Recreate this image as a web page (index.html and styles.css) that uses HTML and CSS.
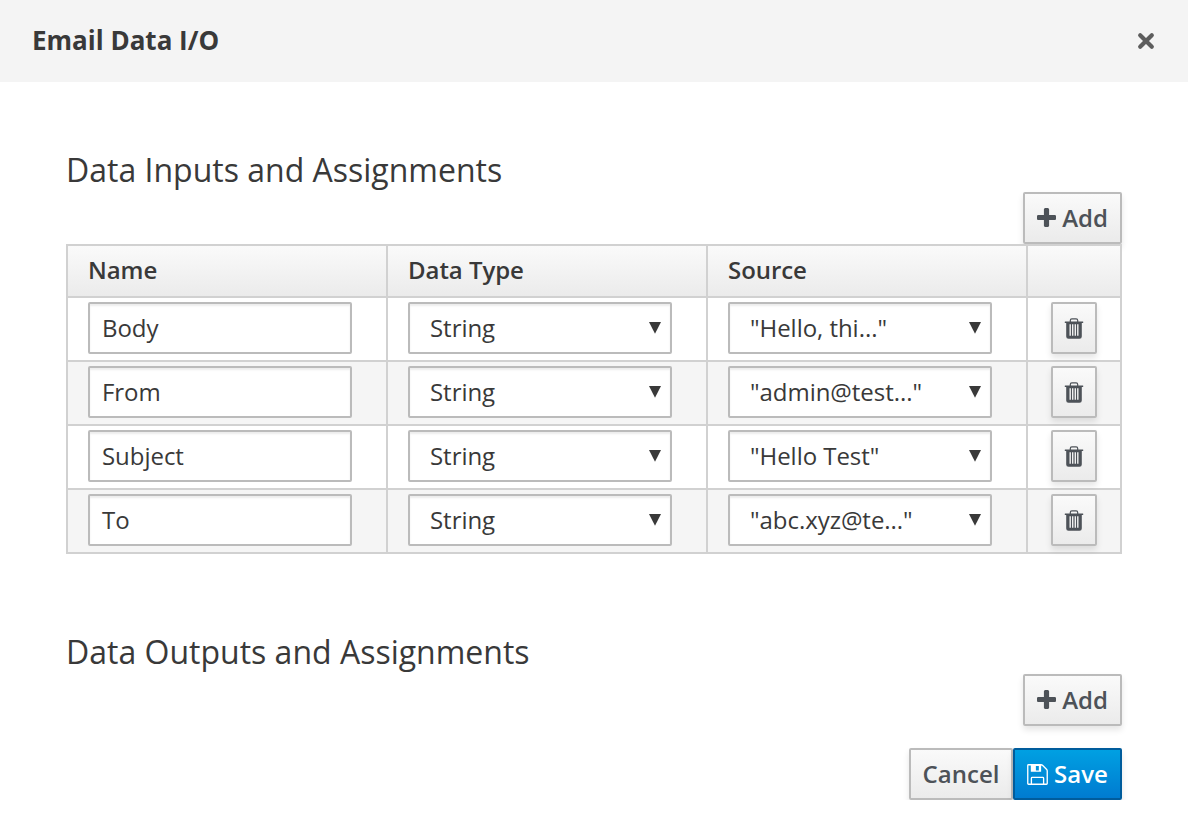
FILE: index.html
```html
<!DOCTYPE html>
<html lang="en">
<head>
<meta charset="utf-8">
<title>Email Data I/O</title>
<link rel="stylesheet" href="styles.css">
</head>
<body>
<svg class="symbols" aria-hidden="true">
  <symbol id="plus" viewBox="192 128 1408 1408"><path fill="currentColor" d="M1600 736v192q0 40-28 68t-68 28h-416v416q0 40-28 68t-68 28h-192q-40 0-68-28t-28-68v-416h-416q-40 0-68-28t-28-68v-192q0-40 28-68t68-28h416v-416q0-40 28-68t68-28h192q40 0 68 28t28 68v416h416q40 0 68 28t28 68z"/></symbol>
  <symbol id="trash" viewBox="0 0 20 22"><path fill="currentColor" fill-rule="evenodd" d="M1.100 4.500H5.700V3.400Q5.700 1.200 7.900 1.200H12.100Q14.300 1.200 14.300 3.400V4.500H18.900Q19.300 4.500 19.300 5.200T18.900 5.900H17.800V19.500Q17.800 21.800 15.500 21.800H4.500Q2.200 21.800 2.200 19.500V5.900H1.100Q.7 5.900 .7 5.200T1.100 4.500ZM6.900 4.500H13.100V3.500Q13.100 2.500 12.100 2.500H7.900Q6.900 2.500 6.900 3.500ZM5.500 7.300V18.700H6.900V7.300ZM8 7.300V18.700H9.400V7.300ZM10.600 7.300V18.700H12V7.300ZM13.100 7.300V18.700H14.500V7.300Z"/></symbol>
  <symbol id="arrow" viewBox="0 0 12 12"><path fill="currentColor" d="M0 0h12L6 11.700Z"/></symbol>
</svg>
<header class="header">
  <h1 class="title">Email Data I/O</h1>
  <svg class="close" viewBox="0 0 16 16"><path d="M2.200 2.200 13.800 13.800M13.800 2.200 2.200 13.800"/></svg>
</header>
<main class="body">
  <h2 class="heading">Data Inputs and Assignments</h2>
  <div class="actions"><button class="btn"><svg class="plus"><use href="#plus"/></svg>Add</button></div>
  <div class="table">
    <div class="th">Name</div><div class="th">Data Type</div><div class="th">Source</div><div class="th"></div>

    <div class="td"><div class="field">Body</div></div>
    <div class="td"><div class="field select">String<svg class="arrow"><use href="#arrow"/></svg></div></div>
    <div class="td"><div class="field select">"Hello, thi..."<svg class="arrow"><use href="#arrow"/></svg></div></div>
    <div class="td tool"><button class="btn delete"><svg class="trash"><use href="#trash"/></svg></button></div>

    <div class="td alt"><div class="field">From</div></div>
    <div class="td alt"><div class="field select">String<svg class="arrow"><use href="#arrow"/></svg></div></div>
    <div class="td alt"><div class="field select">"admin@test..."<svg class="arrow"><use href="#arrow"/></svg></div></div>
    <div class="td alt tool"><button class="btn delete"><svg class="trash"><use href="#trash"/></svg></button></div>

    <div class="td"><div class="field">Subject</div></div>
    <div class="td"><div class="field select">String<svg class="arrow"><use href="#arrow"/></svg></div></div>
    <div class="td"><div class="field select">"Hello Test"<svg class="arrow"><use href="#arrow"/></svg></div></div>
    <div class="td tool"><button class="btn delete"><svg class="trash"><use href="#trash"/></svg></button></div>

    <div class="td alt"><div class="field">To</div></div>
    <div class="td alt"><div class="field select">String<svg class="arrow"><use href="#arrow"/></svg></div></div>
    <div class="td alt"><div class="field select">"abc.xyz@te..."<svg class="arrow"><use href="#arrow"/></svg></div></div>
    <div class="td alt tool"><button class="btn delete"><svg class="trash"><use href="#trash"/></svg></button></div>
  </div>
  <h2 class="heading outputs">Data Outputs and Assignments</h2>
  <div class="actions"><button class="btn"><svg class="plus"><use href="#plus"/></svg>Add</button></div>
  <div class="actions footer">
    <button class="btn cancel">Cancel</button>
    <button class="btn primary"><svg class="save" viewBox="0 0 22 22"><path d="M.8 1.600Q.8 .8 1.600 .8H14.700Q15.700 .8 16.500 1.600L20.400 5.500Q21.200 6.300 21.200 7.300V20.400Q21.200 21.200 20.400 21.200H1.600Q.8 21.200 .8 20.400ZM4.600 21v-6.200q0-.8.800-.8h11.200q.8 0 .8.800V21"/><path class="solid" d="M4 .8H14.800V8H4ZM9.300 2.200V6.700H12.400V2.200Z"/></svg>Save</button>
  </div>
</main>
</body>
</html>
```
FILE: styles.css
```css
* { box-sizing: border-box; }
body {
  margin: 0;
  background: #fff;
  color: #393939;
  font: 24px/34px "Open Sans", sans-serif;
}
.symbols { display: none; }
.header {
  display: flex;
  justify-content: space-between;
  height: 82px;
  padding: 23px 34px 0 32px;
  background: #f4f4f4;
}
.title { margin: 0; font-size: 26px; line-height: 34px; font-weight: 700; }
.close {
  width: 16px;
  height: 16px;
  margin-top: 10px;
  overflow: visible;
  fill: none;
  stroke: #5d5d5d;
  stroke-width: 4.2;
  stroke-linecap: round;
}
.body { padding: 66px 66px 0; }
.heading { margin: 0; font-size: 32px; line-height: 44px; font-weight: 400; }
.outputs { margin-top: 76px; }
.actions { display: flex; justify-content: flex-end; }
.btn {
  display: flex;
  align-items: center;
  justify-content: center;
  width: 99px;
  height: 52px;
  padding: 0;
  border: 2px solid #bbb;
  border-radius: 2px;
  background: linear-gradient(#fafafa, #ebebeb);
  box-shadow: 0 4px 6px rgba(3, 3, 3, .1);
  color: #4d5258;
  font: 600 24px/34px "Open Sans", sans-serif;
}
.plus { width: 19px; height: 19px; margin: 0 6px 1px 0; }
.table {
  position: relative;
  display: grid;
  grid-template-columns: 318px 318px 318px 92px;
  grid-template-rows: 50px repeat(4, 62px);
  gap: 2px;
  border: 2px solid #d1d1d1;
  background: #d1d1d1;
}
.th {
  padding: 7px 20px;
  background: linear-gradient(#fafafa, #ebebeb);
  font-weight: 600;
  letter-spacing: -.05px;
}
.td { padding: 4px 20px; background: #fff; }
.alt { background: #f5f5f5; }
.tool { padding: 4px 23px; }
.field {
  width: 264px;
  height: 52px;
  padding: 7px 12px;
  border: 2px solid #bbb;
  border-radius: 2px;
  background: #fff;
  box-shadow: inset 0 2px 2px rgba(3, 3, 3, .075);
  letter-spacing: -.04px;
  white-space: nowrap;
}
.select { display: flex; justify-content: space-between; padding: 7px 9px 7px 20px; }
.arrow { width: 12px; height: 12px; margin-top: 11px; }
.delete { width: 46px; }
.trash { width: 20px; height: 22px; }
.footer { margin-top: 22px; }
.cancel { width: 104px; }
.primary {
  width: 109px;
  border-color: #005c9c;
  background: linear-gradient(#00a0e2, #007bd0);
  color: #fff;
}
.save {
  width: 21px;
  height: 21px;
  margin: 1px 6px 0 0;
  fill: none;
  stroke: currentColor;
  stroke-width: 1.4;
}
.solid { fill: currentColor; fill-rule: evenodd; stroke: none; }
```
